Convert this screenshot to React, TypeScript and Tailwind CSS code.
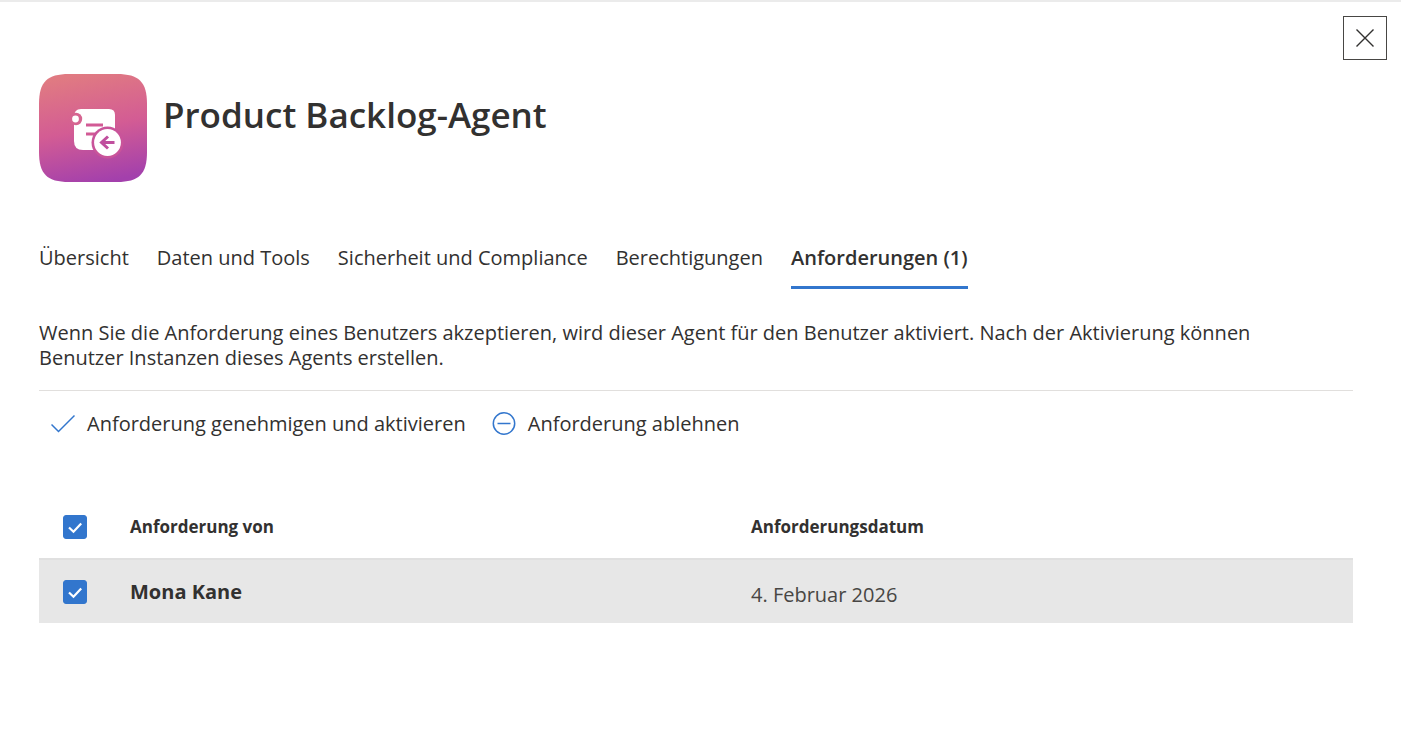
import { useState } from 'react'

const tabs = ['Übersicht', 'Daten und Tools', 'Sicherheit und Compliance', 'Berechtigungen', 'Anforderungen (1)']

const requests = [{ id: 'mona', name: 'Mona Kane', date: '4. Februar 2026' }]

function AgentLogo() {
  return (
    <svg viewBox="0 0 108 108" className="size-[108px] shrink-0" aria-hidden="true">
      <defs>
        <linearGradient id="agent-bg" x1="0.4" y1="0" x2="0.6" y2="1">
          <stop offset="0" stopColor="#e07a82" />
          <stop offset="0.5" stopColor="#d35c94" />
          <stop offset="1" stopColor="#a340ac" />
        </linearGradient>
      </defs>
      <path
        d="M0 30C0 8 8 0 30 0H78C100 0 108 8 108 30V78C108 100 100 108 78 108H30C8 108 0 100 0 78Z"
        fill="url(#agent-bg)"
      />
      <path d="M42 35H70Q76 35 76 41V76H44Q35 76 35 67V43Q35 35 42 35Z" fill="#fff" />
      <circle cx="37" cy="45" r="6.200" fill="#d66591" />
      <circle cx="36.500" cy="45" r="3.400" fill="#fff" />
      <path d="M47 51H64M47 60H57" stroke="#d25a95" strokeWidth="2.800" />
      <circle cx="68.500" cy="68.500" r="16" fill="#c9549a" />
      <circle cx="68.500" cy="68.500" r="13.400" fill="#fff" />
      <path d="M75.500 68.500H62.500M69 62.500L62.500 68.500L69 74.500" fill="none" stroke="#c04f9e" strokeWidth="3" />
    </svg>
  )
}

function Checkbox({ label, checked, onChange }: { label: string; checked: boolean; onChange: () => void }) {
  return (
    <label className="relative block size-6">
      <input
        type="checkbox"
        aria-label={label}
        checked={checked}
        onChange={onChange}
        className="peer block size-6 appearance-none rounded-[3px] border border-[#323130] bg-white checked:border-[#3276cd] checked:bg-[#3276cd]"
      />
      <svg
        viewBox="0 0 24 24"
        className="pointer-events-none absolute inset-0 hidden size-6 peer-checked:block"
        fill="none"
        stroke="#fff"
        strokeWidth="2.200"
      >
        <path d="M6 12.500L10.500 16.800L18.200 8.500" />
      </svg>
    </label>
  )
}

export default function App() {
  const [activeTab, setActiveTab] = useState(4)
  const [selected, setSelected] = useState<string[]>(['mona'])
  const allSelected = selected.length === requests.length

  const toggle = (id: string) =>
    setSelected((prev) => (prev.includes(id) ? prev.filter((item) => item !== id) : [...prev, id]))

  return (
    <div className="min-h-screen bg-white font-['Open_Sans',sans-serif] text-[#323130]">
      <div className="h-0.5 bg-[#ebebeb]" />
      <div className="flex justify-end px-3.5 pt-3.5">
        <button aria-label="Schließen" className="flex size-11 items-center justify-center border border-[#484644]">
          <svg viewBox="0 0 18 18" className="size-[18px]" fill="none" stroke="#323130" strokeWidth="1.400">
            <path d="M0.500 0.500L17.500 17.500M17.500 0.500L0.500 17.500" />
          </svg>
        </button>
      </div>

      <main className="pr-12 pl-[39px]">
        <header className="flex gap-4 pt-3.5">
          <AgentLogo />
          <h1 className="pt-4 text-[35px] leading-[50px] font-semibold">Product Backlog-Agent</h1>
        </header>

        <div role="tablist" className="mt-[46px] flex gap-7">
          {tabs.map((tab, i) => (
            <button
              key={tab}
              role="tab"
              aria-selected={i === activeTab}
              onClick={() => setActiveTab(i)}
              className={
                i === activeTab
                  ? 'border-b-[3px] border-[#3276cd] pt-4 pb-3.5 text-[20px] leading-[28px] font-semibold'
                  : 'border-b-[3px] border-transparent pt-4 pb-3.5 text-[20px] leading-[28px]'
              }
            >
              {tab}
            </button>
          ))}
        </div>

        <p className="mt-[31px] max-w-[1220px] text-[20px] leading-[25px]">
          Wenn Sie die Anforderung eines Benutzers akzeptieren, wird dieser Agent für den Benutzer aktiviert. Nach der
          Aktivierung können Benutzer Instanzen dieses Agents erstellen.
        </p>

        <div className="mt-5 flex gap-[26px] border-t border-[#e1dfdd] px-3 pt-[19px]">
          <button className="flex items-center gap-3 text-[20px] leading-[28px]">
            <svg viewBox="0 0 24 24" className="size-6" fill="none" stroke="#3276cd" strokeWidth="1.500">
              <path d="M0.500 12.500L7.500 19.500L23.500 3.500" />
            </svg>
            Anforderung genehmigen und aktivieren
          </button>
          <button className="flex items-center gap-3 text-[20px] leading-[28px]">
            <svg viewBox="0 0 24 24" className="size-6" fill="none" stroke="#3276cd" strokeWidth="1.500">
              <circle cx="12" cy="11.500" r="10.700" />
              <path d="M5.500 11.500H18.500" />
            </svg>
            Anforderung ablehnen
          </button>
        </div>

        <table className="mt-[57px] w-full table-fixed border-collapse text-left">
          <colgroup>
            <col className="w-[91px]" />
            <col className="w-[621px]" />
            <col />
          </colgroup>
          <thead>
            <tr className="h-16">
              <th className="pl-6">
                <Checkbox
                  label="Alle auswählen"
                  checked={allSelected}
                  onChange={() => setSelected(allSelected ? [] : requests.map((r) => r.id))}
                />
              </th>
              <th className="text-[17px] leading-6 font-bold">Anforderung von</th>
              <th className="text-[17px] leading-6 font-bold">Anforderungsdatum</th>
            </tr>
          </thead>
          <tbody>
            {requests.map((request) => (
              <tr key={request.id} className="h-16 border-t-2 border-[#e0e0e0] bg-[#e7e7e7]">
                <td className="pl-6">
                  <Checkbox
                    label={request.name}
                    checked={selected.includes(request.id)}
                    onChange={() => toggle(request.id)}
                  />
                </td>
                <td className="text-[20px] leading-7 font-bold">{request.name}</td>
                <td className="pt-1.5 text-[20px] leading-7 text-[#484644]">{request.date}</td>
              </tr>
            ))}
          </tbody>
        </table>
      </main>
    </div>
  )
}
